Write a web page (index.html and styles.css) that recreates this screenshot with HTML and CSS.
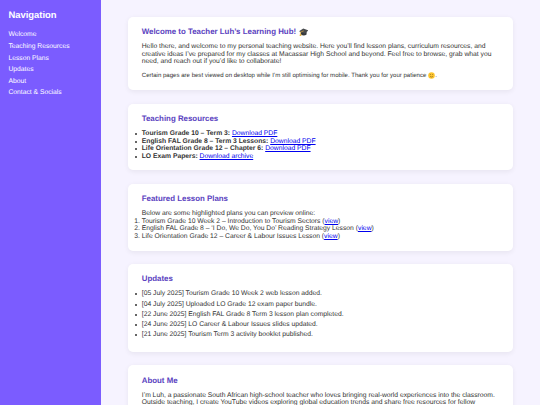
FILE: index.html
```
<!DOCTYPE html>
<html lang="en">
<head>
    <meta charset="UTF-8">
    <meta name="viewport" content="width=device-width, initial-scale=1.0">
    <title>Teacher Luh's Learning Hub</title>
    <link rel="stylesheet" href="styles.css">
</head>
<body>
    <nav class="sidebar">
        <h2>Navigation</h2>
        <a href="#welcome">Welcome</a>
        <a href="#resources">Teaching Resources</a>
        <a href="#plans">Lesson Plans</a>
        <a href="#updates">Updates</a>
        <a href="#about">About</a>
        <a href="#contact">Contact &amp; Socials</a>
    </nav>
    <main>
        <section id="welcome">
            <h2>Welcome to Teacher Luh’s Learning Hub!
                <svg class="cap" viewBox="0 0 20 18">
                    <path d="M4 8v6q6 4 12 0V8z" fill="#35383b"/>
                    <path d="M0 7L9 1l11 4-8 7z" fill="#484b4e"/>
                    <path d="M10 6L3 9v6" fill="none" stroke="#d9a53a" stroke-width="1.5"/>
                    <path d="M2 13h3v5H1z" fill="#e2ae3d"/>
                </svg>
            </h2>
            <p>Hello there, and welcome to my personal teaching website. Here you’ll find lesson plans, curriculum resources, and<br>
            creative ideas I’ve prepared for my classes at Macassar High School and beyond. Feel free to browse, grab what you<br>
            need, and reach out if you’d like to collaborate!</p>
            <p class="note">Certain pages are best viewed on desktop while I’m still optimising for mobile. Thank you for your patience <svg class="smile" viewBox="0 0 16 16">
                <circle cx="8" cy="8" r="7.5" fill="#fcc52f"/>
                <circle cx="5.3" cy="6" r="1.1" fill="#66451c"/>
                <circle cx="10.7" cy="6" r="1.1" fill="#66451c"/>
                <path d="M4.5 10q3.500 3 7 0" fill="none" stroke="#66451c" stroke-width="1.1"/>
            </svg>.</p>
        </section>

        <section id="resources">
            <h2>Teaching Resources</h2>
            <ul>
                <li><b>Tourism Grade 10 – Term 3:</b> <a href="#">Download PDF</a></li>
                <li><b>English FAL Grade 8 – Term 3 Lessons:</b> <a href="#">Download PDF</a></li>
                <li><b>Life Orientation Grade 12 – Chapter 6:</b> <a href="#">Download PDF</a></li>
                <li><b>LO Exam Papers:</b> <a href="#">Download archive</a></li>
            </ul>
        </section>

        <section id="plans">
            <h2>Featured Lesson Plans</h2>
            <p>Below are some highlighted plans you can preview online:</p>
            <ol>
                <li>Tourism Grade 10 Week 2 – Introduction to Tourism Sectors (<a href="#">view</a>)</li>
                <li>English FAL Grade 8 – ‘I Do, We Do, You Do’ Reading Strategy Lesson (<a href="#">view</a>)</li>
                <li>Life Orientation Grade 12 – Career &amp; Labour Issues Lesson (<a href="#">view</a>)</li>
            </ol>
        </section>

        <section id="updates">
            <h2>Updates</h2>
            <ul class="updates-list">
                <li>[05 July 2025] Tourism Grade 10 Week 2 web lesson added.</li>
                <li>[04 July 2025] Uploaded LO Grade 12 exam paper bundle.</li>
                <li>[22 June 2025] English FAL Grade 8 Term 3 lesson plan completed.</li>
                <li>[24 June 2025] LO Career &amp; Labour Issues slides updated.</li>
                <li>[21 June 2025] Tourism Term 3 activity booklet published.</li>
            </ul>
        </section>

        <section id="about">
            <h2>About Me</h2>
            <p>I’m Luh, a passionate South African high-school teacher who loves bringing real-world experiences into the classroom.<br>
            Outside teaching, I create YouTube videos exploring global education trends and share free resources for fellow</p>
        </section>
    </main>
</body>
</html>
```
FILE: styles.css
```
* {
    box-sizing: border-box;
    margin: 0;
    padding: 0;
}
body {
    display: flex;
    height: 405px;
    overflow: hidden;
    font-family: "Liberation Sans", Arial, sans-serif;
    font-size: 6.75px;
    line-height: 7.6px;
    color: #333;
    background: #f6f3ff;
    text-rendering: geometricPrecision;
}
.sidebar {
    flex: 0 0 101.25px;
    padding: 10.2px 8.4px;
    background: #7b5cff;
    color: white;
}
.sidebar h2 {
    font-size: 9.45px;
    line-height: 11px;
    margin-bottom: 10.1px;
}
.sidebar a {
    display: block;
    margin-bottom: 4.05px;
    color: white;
    text-decoration: none;
}
main {
    flex: 1;
    padding: 16.8px 27px;
}
section {
    margin-bottom: 13.5px;
    padding: 10.2px 13.5px 10.1px;
    background: white;
    border-radius: 5px;
    box-shadow: 0 1.7px 5px rgba(0, 0, 0, 0.06);
    white-space: nowrap;
}
section h2 {
    margin-bottom: 6.75px;
    font-size: 7.88px;
    line-height: 9.3px;
    color: #5a3fc0;
}
.note {
    margin-top: 7.3px;
    font-size: 6.07px;
    line-height: 7px;
}
.cap {
    width: 9.5px;
    height: 8.5px;
    margin: -1px 0 -1px 0.6px;
    vertical-align: -1.5px;
}
.smile {
    width: 7px;
    height: 7px;
    margin: -1px 0.1px;
    vertical-align: -1.3px;
}
ul {
    list-style: none;
}
ul li {
    position: relative;
}
ul li::before {
    content: "";
    position: absolute;
    left: -6.6px;
    top: 3px;
    width: 2px;
    height: 2px;
    border-radius: 50%;
    background: #333;
}
.updates-list li {
    margin-bottom: 2.7px;
}
section a {
    color: #0000ee;
}
```
